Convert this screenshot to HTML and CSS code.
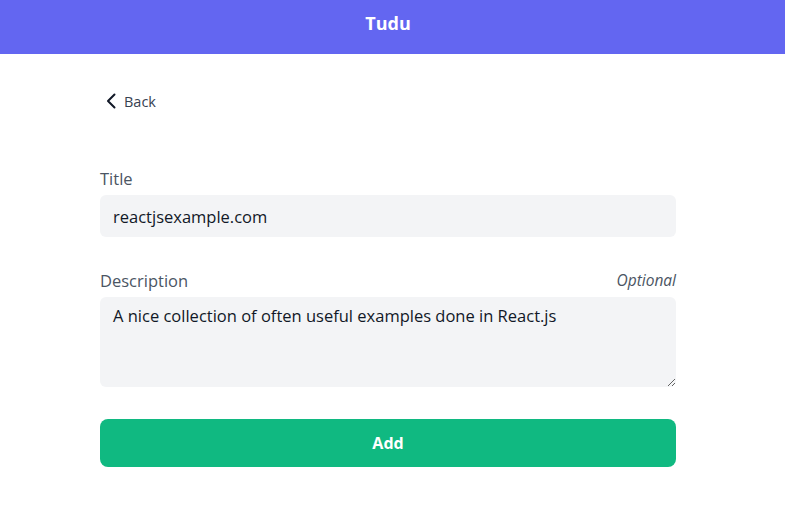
FILE: index.html
```html
<!DOCTYPE html>
<html lang="en">
<head>
<meta charset="utf-8">
<title>Tudu</title>
<link rel="stylesheet" href="styles.css">
</head>
<body>
<header class="topbar"><h1 class="brand">Tudu</h1></header>
<main class="page">
  <a class="back" href="#">
    <svg class="back-icon" viewBox="0 0 12 16" width="12" height="16" aria-hidden="true"><path d="M9.5 1.5 L3 8 L9.5 14.5" fill="none" stroke="#111827" stroke-width="2" stroke-linecap="round" stroke-linejoin="round"/></svg>
    <span>Back</span>
  </a>
  <form class="form">
    <div class="field">
      <div class="label-row"><label class="label" for="title">Title</label></div>
      <input class="input" id="title" type="text" value="reactjsexample.com">
    </div>
    <div class="field">
      <div class="label-row"><label class="label" for="desc">Description</label><span class="optional">Optional</span></div>
      <textarea class="textarea" id="desc">A nice collection of often useful examples done in React.js</textarea>
    </div>
    <button class="submit" type="button">Add</button>
  </form>
</main>
</body>
</html>
```
FILE: styles.css
```css
* { box-sizing: border-box; }
html, body { margin: 0; padding: 0; background: #ffffff; }
body { font-family: "Open Sans", "Noto Sans", sans-serif; color: #111827; }
.topbar {
  height: 54px;
  background: #6366f1;
  display: flex;
  align-items: center;
  justify-content: center;
  padding-right: 9px;
  padding-bottom: 8px;
}
.brand { margin: 0; font-size: 18px; font-weight: 700; color: #ffffff; line-height: 1; }
.page { width: 576px; margin-left: 100px; }
.back {
  margin-top: 37px;
  height: 20px;
  width: max-content;
  display: flex;
  align-items: center;
  gap: 7px;
  padding-left: 5px;
  text-decoration: none;
  color: #374151;
  font-size: 14.5px;
}
.back-icon { display: block; }
.form { margin-top: 55px; display: flex; flex-direction: column; }
.field { display: flex; flex-direction: column; gap: 5px; margin-bottom: 31px; }
.field:last-of-type { margin-bottom: 32px; }
.label-row { display: flex; justify-content: space-between; align-items: center; height: 24px; }
.label { font-size: 16.5px; color: #4b5563; }
.optional { font-size: 15.5px; font-style: italic; color: #4b5563; }
.input, .textarea {
  width: 100%;
  border: none;
  background: #f3f4f6;
  border-radius: 6px;
  font-family: inherit;
  font-size: 16.5px;
  color: #111827;
  padding: 0 13px;
  outline: none;
}
.input { height: 42px; }
.textarea { height: 90px; padding-top: 8px; line-height: 22px; resize: vertical; display: block; }
.submit {
  height: 48px;
  border: none;
  border-radius: 8px;
  background: #10b981;
  color: #ffffff;
  font-family: inherit;
  font-size: 16px;
  font-weight: 700;
  width: 100%;
}
```
